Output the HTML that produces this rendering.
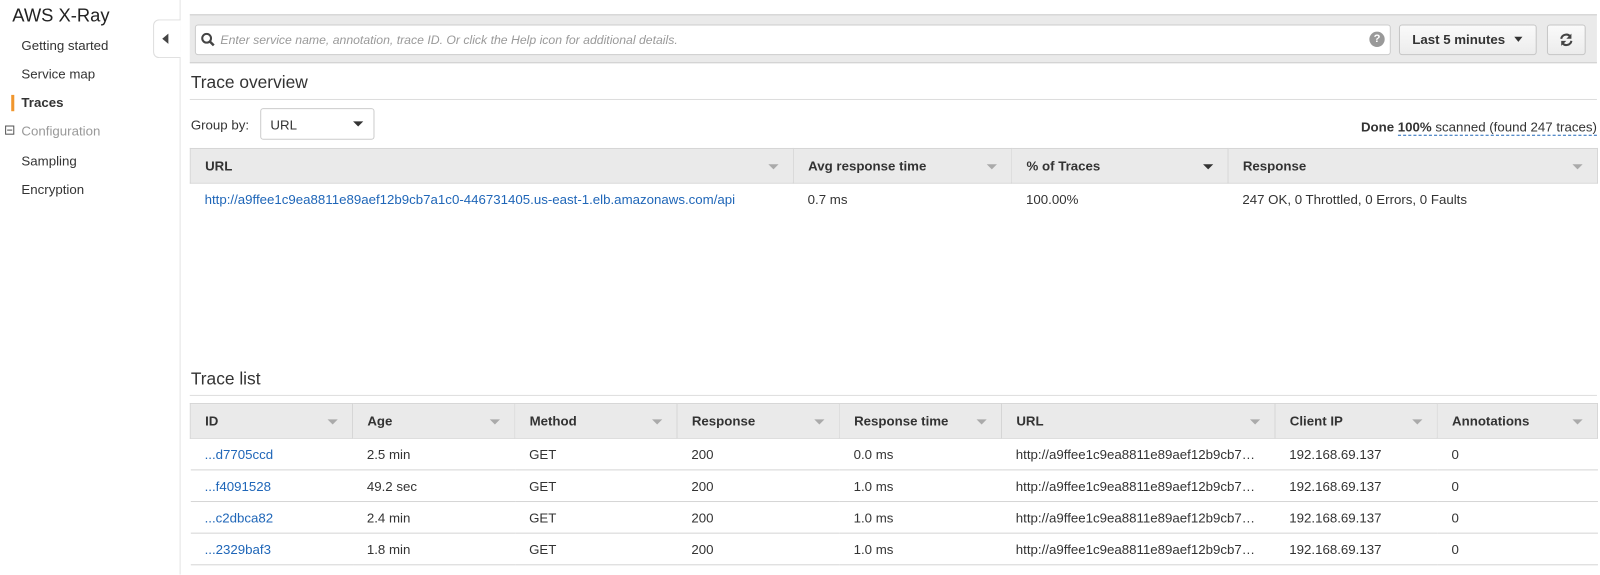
<!DOCTYPE html>
<html><head><style>
body{margin:0;width:1600px;height:563px;overflow:hidden;background:#fff;font-family:"Liberation Sans",sans-serif;font-size:13px;color:#333;position:relative}
#w{position:absolute;left:0;top:0;width:1568px;height:552px;transform:scale(1.0204);transform-origin:0 0}
.a{position:absolute}
.side{left:0;top:0;width:176px;height:563px;border-right:1px solid #e3e3e3}
.nav{position:absolute;left:21px;font-size:13px;color:#333}
.bar{left:186px;top:14px;width:1379px;height:48px;background:#eaeaea;border-top:1px solid #ccc;border-bottom:1px solid #ccc;box-sizing:border-box}
.btn{background:linear-gradient(#fafafa,#ececec);border:1px solid #c6c6c6;border-radius:3px;box-sizing:border-box}
table{border-collapse:collapse;position:absolute;left:186px;width:1379px;table-layout:fixed}
th{background:#eaeaea;text-align:left;font-weight:bold;height:33px;padding:0 14px;border:1px solid #d5d5d5;position:relative;color:#333}
th:after{content:"";position:absolute;right:14px;top:15px;border:5px solid transparent;border-top:5px solid #aaa;border-bottom:0}
th.dark:after{border-top-color:#333}
td{padding:0 14px;height:30px;border-bottom:1px solid #d5d5d5;white-space:nowrap;overflow:hidden;text-overflow:ellipsis}
a{color:#1f66b8;text-decoration:none}
</style></head><body><div id="w">
<div class="a side"></div>
<div class="a" style="left:12px;top:5px;font-size:18px;color:#222">AWS X-Ray</div>
<div class="nav" style="top:37px">Getting started</div>
<div class="nav" style="top:65px">Service map</div>
<div class="a" style="left:11px;top:93px;width:3px;height:16px;background:#f0962e"></div>
<div class="nav" style="top:93px;font-weight:bold">Traces</div>
<div class="a" style="left:5px;top:123px;width:9px;height:9px;border:1px solid #555;box-sizing:border-box"><div style="position:absolute;left:1px;top:3px;width:5px;height:1px;background:#555"></div></div>
<div class="nav" style="top:121px;color:#999">Configuration</div>
<div class="nav" style="top:150px">Sampling</div>
<div class="nav" style="top:178px">Encryption</div>
<div class="a" style="left:150px;top:19px;width:27px;height:38px;background:#fff;border:1px solid #ddd;border-right:none;border-radius:6px 0 0 6px;box-sizing:border-box"></div>
<div class="a" style="left:159px;top:33px;border:5px solid transparent;border-right:6px solid #444;border-left:0"></div>
<div class="a bar"></div>
<div class="a" style="left:191px;top:24px;width:1172px;height:30px;background:#fff;border:1px solid #ccc;border-radius:3px;box-sizing:border-box"></div>
<svg class="a" style="left:197px;top:32px" width="14" height="14"><circle cx="5.5" cy="5.5" r="4.3" fill="none" stroke="#444" stroke-width="2"/><line x1="8.5" y1="8.5" x2="12.5" y2="12.5" stroke="#444" stroke-width="2.4"/></svg>
<div class="a" style="left:216px;top:32px;font-size:12px;font-style:italic;color:#999">Enter service name, annotation, trace ID. Or click the Help icon for additional details.</div>
<div class="a" style="left:1342px;top:31px;width:15px;height:15px;border-radius:50%;background:#999;color:#fff;font-size:11px;font-weight:bold;text-align:center;line-height:15px">?</div>
<div class="a btn" style="left:1371px;top:24px;width:135px;height:30px"></div>
<div class="a" style="left:1384px;top:31px;font-weight:bold">Last 5 minutes</div>
<div class="a" style="left:1484px;top:36px;border:4px solid transparent;border-top:5px solid #333;border-bottom:0"></div>
<div class="a btn" style="left:1516px;top:24px;width:38px;height:30px"></div>
<svg class="a" style="left:1528px;top:32px" width="14" height="14" viewBox="0 0 14 14"><path d="M2 6 A5 5 0 0 1 11 4" fill="none" stroke="#444" stroke-width="2"/><path d="M12 1 L12 6 L7 6 Z" fill="#444"/><path d="M12 8 A5 5 0 0 1 3 10" fill="none" stroke="#444" stroke-width="2"/><path d="M2 13 L2 8 L7 8 Z" fill="#444"/></svg>
<div class="a" style="left:187px;top:71px;font-size:17px;color:#333">Trace overview</div>
<div class="a" style="left:186px;top:97px;width:1379px;height:1px;background:#ddd"></div>
<div class="a" style="left:187px;top:115px">Group by:</div>
<div class="a" style="left:255px;top:106px;width:112px;height:31px;border:1px solid #ccc;border-radius:3px;box-sizing:border-box"></div>
<div class="a" style="left:265px;top:115px">URL</div>
<div class="a" style="left:346px;top:119px;border:5px solid transparent;border-top:5px solid #333;border-bottom:0"></div>
<div class="a" style="right:3px;top:117px;font-size:13px"><b>Done</b> <span style="border-bottom:1px dashed #1f66b8"><b>100%</b> scanned (found 247 traces)</span></div>
<table style="top:145px">
<colgroup><col style="width:591px"><col style="width:214px"><col style="width:212px"><col style="width:362px"></colgroup>
<tr><th>URL</th><th>Avg response time</th><th class="dark">% of Traces</th><th>Response</th></tr>
<tr><td style="border:none"><a>http://a9ffee1c9ea8811e89aef12b9cb7a1c0-446731405.us-east-1.elb.amazonaws.com/api</a></td><td style="border:none">0.7 ms</td><td style="border:none">100.00%</td><td style="border:none">247 OK, 0 Throttled, 0 Errors, 0 Faults</td></tr>
</table>
<div class="a" style="left:187px;top:362px;font-size:17px">Trace list</div>
<div class="a" style="left:186px;top:387px;width:1379px;height:1px;background:#ddd"></div>
<table style="top:395px">
<colgroup><col style="width:159px"><col style="width:159px"><col style="width:159px"><col style="width:159px"><col style="width:159px"><col style="width:268px"><col style="width:159px"><col style="width:157px"></colgroup>
<tr><th>ID</th><th>Age</th><th>Method</th><th>Response</th><th>Response time</th><th>URL</th><th>Client IP</th><th>Annotations</th></tr>
<tr><td><a>...d7705ccd</a></td><td>2.5 min</td><td>GET</td><td>200</td><td>0.0 ms</td><td>http://a9ffee1c9ea8811e89aef12b9cb7a1c0</td><td>192.168.69.137</td><td>0</td></tr>
<tr><td><a>...f4091528</a></td><td>49.2 sec</td><td>GET</td><td>200</td><td>1.0 ms</td><td>http://a9ffee1c9ea8811e89aef12b9cb7a1c0</td><td>192.168.69.137</td><td>0</td></tr>
<tr><td><a>...c2dbca82</a></td><td>2.4 min</td><td>GET</td><td>200</td><td>1.0 ms</td><td>http://a9ffee1c9ea8811e89aef12b9cb7a1c0</td><td>192.168.69.137</td><td>0</td></tr>
<tr><td><a>...2329baf3</a></td><td>1.8 min</td><td>GET</td><td>200</td><td>1.0 ms</td><td>http://a9ffee1c9ea8811e89aef12b9cb7a1c0</td><td>192.168.69.137</td><td>0</td></tr>
</table>
</div></body></html>
